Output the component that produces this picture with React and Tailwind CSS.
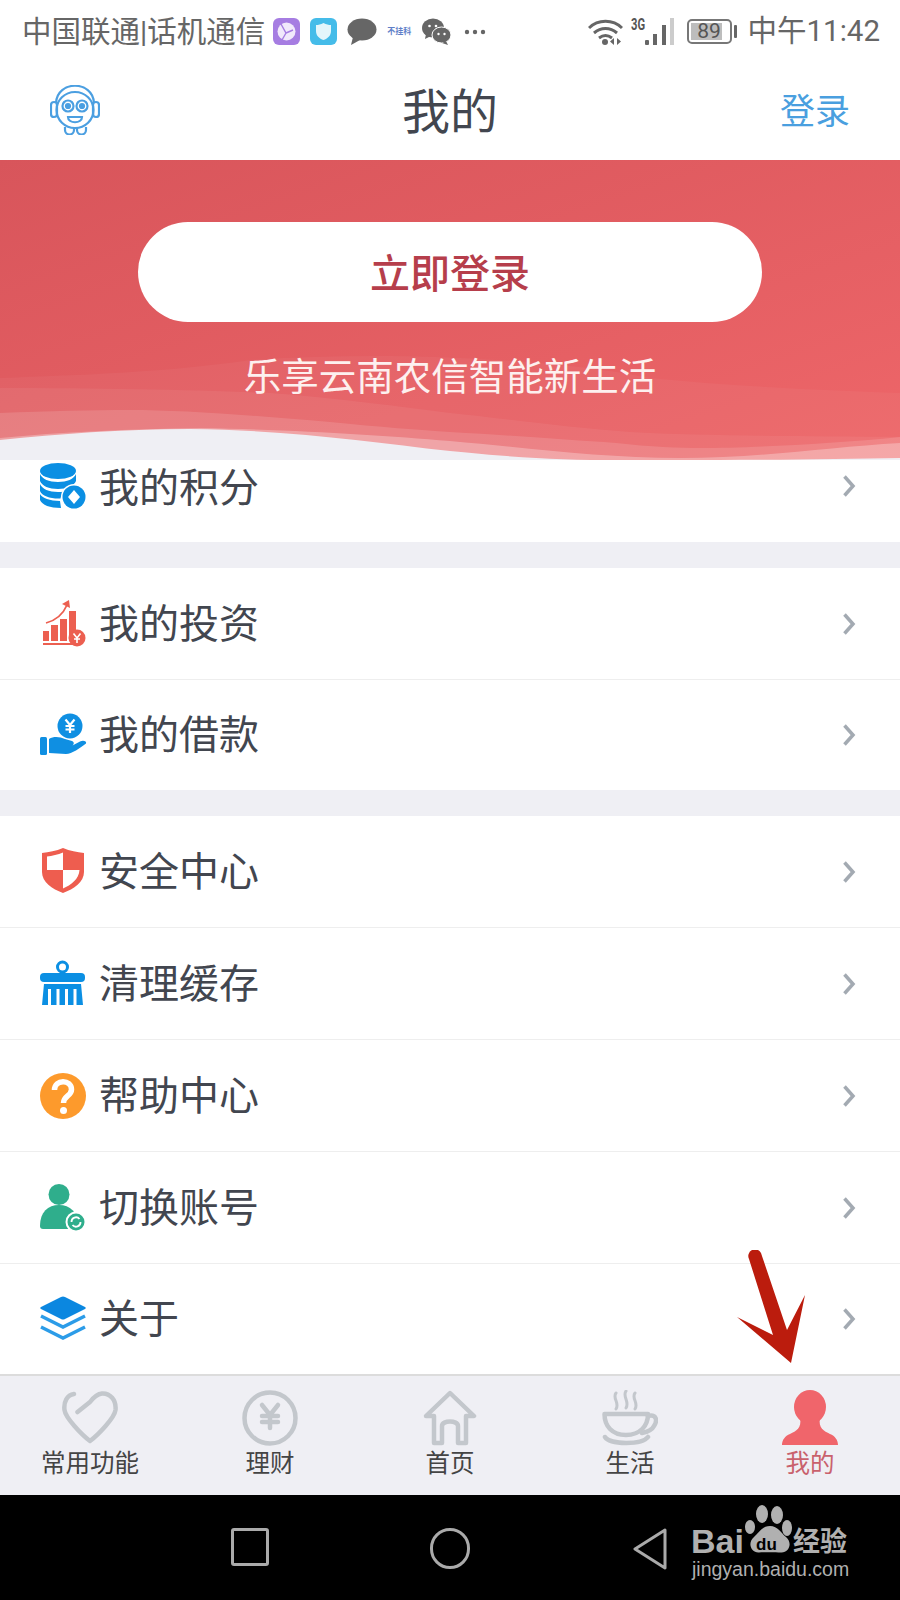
import React from 'react';

const GAP = 'h-[26px] bg-[#efeff4]';

// status bar bits
const StatusBar = () => (
  <div className="h-[60px] bg-white flex items-center justify-between pl-[22px] pr-[20px] pt-[3px] text-[#666666] text-[29.500px] leading-none">
    <div className="flex items-center">
      <span className="pt-[2px]">中国联通|话机通信</span>
      <svg className="ml-[8px]" width="27" height="27" viewBox="0 0 27 27">
        <rect width="27" height="27" rx="6" fill="#a67de2" />
        <circle cx="13.500" cy="13.500" r="9" fill="#f1e9fb" />
        <path d="M8 6l5 9 7-3M13 15l-4 7" stroke="#a67de2" strokeWidth="1.400" fill="none" />
      </svg>
      <svg className="ml-[10px]" width="27" height="27" viewBox="0 0 27 27">
        <rect width="27" height="27" rx="6" fill="#45bce9" />
        <path d="M13.500 5c3 1.500 5 2 7.500 2v6c0 5-3.500 7.500-7.500 9-4-1.500-7.500-4-7.500-9V7c2.500 0 4.500-.5 7.500-2z" fill="#e4f6fb" />
      </svg>
      <svg className="ml-[10px]" width="30" height="27" viewBox="0 0 30 27">
        <ellipse cx="15" cy="11.500" rx="14.500" ry="11" fill="#666666" />
        <path d="M6 19l-2 8 9-5z" fill="#666666" />
      </svg>
      <span className="ml-[10px] w-[24px] text-[8px] font-bold text-[#5f7fc8] whitespace-nowrap">不挂科</span>
      <svg className="ml-[11px]" width="29" height="27" viewBox="0 0 29 27">
        <ellipse cx="11" cy="10" rx="11" ry="9.500" fill="#666666" />
        <path d="M4 16l-1 5 6-3z" fill="#666666" />
        <ellipse cx="19.500" cy="17" rx="9.500" ry="8" fill="#666666" stroke="#ffffff" strokeWidth="1" />
        <path d="M24 23l2 4-6-2z" fill="#666666" />
        <circle cx="7.500" cy="8" r="1.300" fill="#fff" />
        <circle cx="14" cy="8" r="1.300" fill="#fff" />
        <circle cx="16.500" cy="16" r="1.200" fill="#fff" />
        <circle cx="22.500" cy="16" r="1.200" fill="#fff" />
      </svg>
      <svg className="ml-[13px]" width="22" height="6" viewBox="0 0 22 6">
        <circle cx="3" cy="3" r="2.200" fill="#666666" />
        <circle cx="11" cy="3" r="2.200" fill="#666666" />
        <circle cx="19" cy="3" r="2.200" fill="#666666" />
      </svg>
    </div>
    <div className="flex items-center">
      <svg width="35" height="28" viewBox="0 0 35 28">
        <path d="M1 10C10 1 25 1 34 10M6 15c7-6 16-6 23 0M11 20c4-3 9-3 13 0" stroke="#666666" strokeWidth="3" fill="none" />
        <circle cx="17" cy="24" r="3" fill="#666666" />
        <path d="M26 20v7l-4-3.500zM29 20v7l4-3.500z" fill="#666666" />
      </svg>
      <div className="relative ml-[8px] w-[44px] h-[28px]">
        <span className="absolute left-0 -top-[1px] text-[16px] font-bold text-[#555555]" style={{ transform: 'scaleX(.7)', transformOrigin: 'left top' }}>3G</span>
        <svg className="absolute left-0 top-0" width="44" height="28" viewBox="0 0 44 28">
          <rect x="14" y="22" width="4" height="5" rx="1" fill="#666666" />
          <rect x="22" y="16" width="4" height="11" fill="#666666" />
          <rect x="31" y="7" width="4" height="20" fill="#666666" />
          <rect x="39" y="0" width="4" height="27" fill="#cccccc" />
        </svg>
      </div>
      <div className="ml-[12px] w-[45px] h-[25px] border-2 border-[#777777] rounded-[5px] p-[2px] relative">
        <div className="h-full w-[86%] bg-[#bdbdbd]" />
        <span className="absolute inset-0 flex items-center justify-center text-[21px] text-[#555555]" style={{ fontFamily: 'Roboto' }}>89</span>
      </div>
      <div className="ml-[2px] w-[3px] h-[13px] bg-[#666666] rounded-[1px]" />
      <span className="ml-[11px] pt-[1px]">中午11:42</span>
    </div>
  </div>
);

const Header = () => (
  <div className="h-[100px] bg-white relative flex items-center justify-center">
    <svg className="absolute left-[50px] top-[25px]" width="50" height="50" viewBox="0 0 50 50" fill="none" stroke="#4b9fe1" strokeWidth="2.200">
      <path d="M6 18C7 -5 43 -5 44 18" />
      <rect x="1" y="17" width="6" height="15" rx="3" />
      <rect x="43" y="17" width="6" height="15" rx="3" />
      <ellipse cx="25" cy="25" rx="18.500" ry="18" />
      <circle cx="18" cy="21" r="5.500" />
      <circle cx="32" cy="21" r="5.500" />
      <circle cx="18" cy="21" r="2" fill="#4b9fe1" />
      <circle cx="32" cy="21" r="2" fill="#4b9fe1" />
      <path d="M18 32h14c0 7-14 7-14 0z" />
      <path d="M15 42v3a4.500 4.500 0 0 0 9 0v-2M27 43v2a4.500 4.500 0 0 0 9 0v-3" />
    </svg>
    <span className="pt-[6px] text-[48px] text-[#42464f] leading-none">我的</span>
    <span className="absolute left-[780px] pt-[4px] text-[35px] text-[#4a9fdf] leading-none">登录</span>
  </div>
);

const Banner = () => (
  <div className="h-[300px] relative overflow-hidden bg-linear-to-br from-[#d8555b] to-[#ee6669]">
    <svg className="absolute left-0 top-0" width="900" height="300" viewBox="0 0 900 300">
      <path d="M0 218C80 215 170 212 250 200C400 190 560 200 650 218C730 226 820 230 900 233V300H0Z" fill="#ffffff" fillOpacity="0.04" />
      <path d="M0 228C100 228 200 230 270 233C340 238 400 247 450 253C500 258 570 268 630 272C700 276 800 276 900 277V300H0Z" fill="#ffffff" fillOpacity="0.06" />
      <path d="M0 253C50 251 90 250 130 250C180 250 250 255 330 262C380 267 420 270 450 272C520 276 570 280 616 283C650 287 680 288 700 288C750 288 830 284 900 277V300H0Z" fill="#ffffff" fillOpacity="0.13" />
      <path d="M0 278C60 272 130 269 200 268C300 270 380 275 450 281C530 288 600 298 680 298C760 298 830 287 900 283V300H0Z" fill="#ffffff" fillOpacity="0.28" />
      <path d="M0 280C60 274 120 269 190 269C290 270 370 282 450 291C520 298 560 300 620 300L720 300C780 300 850 299 900 298V300H0Z" fill="#efeff4" />
    </svg>
    <div className="relative flex flex-col items-center">
      <div className="mt-[62px] w-[624px] h-[100px] rounded-full bg-white flex items-center justify-center pt-[5px] text-[40px] text-[#b63e4b] leading-none font-medium">立即登录</div>
      <div className="mt-[37px] text-[37.500px] text-[#fdf0ef] leading-none">乐享云南农信智能新生活</div>
    </div>
  </div>
);

const Chevron = () => (
  <svg className="ml-auto mr-[44px]" width="14" height="24" viewBox="0 0 14 24" fill="none">
    <path d="M2.500 2.500L11 12L2.500 21.500" stroke="#a3aab2" strokeWidth="3.500" />
  </svg>
);

const PointsIcon = () => (
  <svg width="48" height="48" viewBox="0 0 48 48">
    <g fill="#0b8fe3">
      <ellipse cx="18" cy="9" rx="18" ry="8" />
      <path d="M0 12c2 5 9 8 18 8s16-3 18-8v7c-2 5-9 8-18 8S2 24 0 19z" />
      <path d="M0 22c2 5 9 8 18 8 2 0 4 0 6-.5-2 2-3 4-3.500 7C11 37 2 34 0 29z" />
      <path d="M0 32c2 4 10 7 20 7l1 7C10 46 2 43 0 38z" />
    </g>
    <circle cx="34" cy="35" r="13" fill="#ffffff" />
    <circle cx="34" cy="35" r="11.500" fill="#0b8fe3" />
    <path d="M34 28l6 7-6 7-6-7z" fill="#ffffff" />
  </svg>
);

const InvestIcon = () => (
  <svg width="48" height="48" viewBox="0 0 48 48">
    <g fill="#ec5f50">
      <rect x="3" y="31" width="6" height="10" />
      <rect x="11" y="25" width="7" height="16" />
      <rect x="20" y="19" width="7" height="22" />
      <rect x="29" y="11" width="7" height="24" />
      <rect x="3" y="43" width="30" height="2" />
      <polygon points="29,0 22,4 30,8" />
      <circle cx="37" cy="38" r="8.500" />
    </g>
    <path d="M6 23Q21 19 27 5" fill="none" stroke="#ec5f50" strokeWidth="1.800" />
    <path d="M33.500 33.500L37 38l3.500-4.500M37 38v5M34 39h6" fill="none" stroke="#ffffff" strokeWidth="1.600" />
  </svg>
);

const LoanIcon = () => (
  <svg width="48" height="48" viewBox="0 0 48 48">
    <circle cx="30" cy="15" r="12.500" fill="#0f8fe2" />
    <path d="M25.500 8.500L30 14l4.500-5.500M30 14v8M25.500 15h9M25.500 18.500h9" fill="none" stroke="#ffffff" strokeWidth="2.200" />
    <rect x="0" y="26" width="7" height="18" rx="1.500" fill="#0f8fe2" />
    <path d="M9 28C14 25 20 26 25 28L32 30C34.500 31 34 33.500 32.500 34.500L40 30.500C43 29 47 30 46 32.500C40 37 32 43 26 43L9 42Z" fill="#0f8fe2" />
  </svg>
);

const ShieldIcon = () => (
  <svg width="48" height="48" viewBox="0 0 48 48">
    <path d="M23 0C30 3 37 4 44 5V24C44 34 34 41 23 45C12 41 2 34 2 24V5C9 4 16 3 23 0Z" fill="#ee5d4f" />
    <path d="M7 8.500C12 8 18 6.500 23 4.500V22H7ZM23 22H39.500C39 31 31 37 23 40.500Z" fill="#ffffff" />
  </svg>
);

const BrushIcon = () => (
  <svg width="48" height="48" viewBox="0 0 48 48">
    <circle cx="22.500" cy="7" r="5" fill="none" stroke="#0b8fe3" strokeWidth="3" />
    <rect x="0" y="13" width="45" height="9" rx="4" fill="#0b8fe3" />
    <path d="M4 24H41L43 45H2Z" fill="#0b8fe3" />
    <path d="M8 29h3v16H8zM16.500 29h3v16h-3zM25 29h3v16h-3zM33.500 29h3v16h-3z" fill="#ffffff" />
  </svg>
);

const HelpIcon = () => (
  <svg width="48" height="48" viewBox="0 0 48 48">
    <circle cx="23" cy="24" r="23" fill="#fd9a2c" />
    <path d="M14.500 18C14.500 7 31.500 7 31.500 17.500C31.500 24 23.500 24 23.500 31" fill="none" stroke="#ffffff" strokeWidth="5.500" />
    <circle cx="23.500" cy="38.500" r="3.500" fill="#ffffff" />
  </svg>
);

const SwitchIcon = () => (
  <svg width="48" height="48" viewBox="0 0 48 48">
    <circle cx="19" cy="10.500" r="10.500" fill="#2fae8c" />
    <path d="M0 42C0 28 8 21 19 21C30 21 38 28 38 42Q38 45 35 45H3Q0 45 0 42Z" fill="#2fae8c" />
    <circle cx="36" cy="38" r="9.500" fill="#2fae8c" stroke="#ffffff" strokeWidth="2" />
    <path d="M31.500 38a4.500 4.500 0 0 1 8-3M40.500 38a4.500 4.500 0 0 1-8 3" fill="none" stroke="#ffffff" strokeWidth="1.800" />
  </svg>
);

const LayersIcon = () => (
  <svg width="48" height="48" viewBox="0 0 48 48">
    <path d="M21 2Q23 1 25 2L45 12Q46.500 13 45 14L25 24Q23 25 21 24L1 14Q-.5 13 1 12Z" fill="#0b87e0" />
    <path d="M1 21L23 32L45 21M1 32L23 43L45 32" fill="none" stroke="#2c9ce8" strokeWidth="3.400" />
  </svg>
);

const Row = ({ icon, label, last, className = 'h-[112px]', labelClass = 'pt-[2px]' }) => (
  <div className={`flex items-center bg-white pl-[40px] ${className} ${last ? '' : 'border-b-[1.500px] border-[#eeeeee]'}`}>
    {icon}
    <span className={`ml-[11px] text-[40px] text-[#42464f] leading-none ${labelClass}`}>{label}</span>
    <Chevron />
  </div>
);

const tabs = [
  {
    label: '常用功能',
    icon: <path d="M12 4C5 5 1.500 12 2.500 20C3.500 28 20 45 28 51C36 45 52.500 28 53.500 20C54.500 10 48 3 40 3.500C35 4 31 8 28 12L15.500 22" />,
  },
  {
    label: '理财',
    icon: (
      <>
        <circle cx="28" cy="28" r="25.500" />
        <path d="M20 15L28 25L36 15M28 25V38M20 26H36M20 32H36" />
      </>
    ),
  },
  {
    label: '首页',
    icon: <path d="M20 53H12V26H4L28 3L52 26H44V53H36V36C36 30 20 30 20 36Z" />,
  },
  {
    label: '生活',
    icon: (
      <>
        <path d="M2.500 24H46C46 36 38 45 24 45C10 45 2.500 36 2.500 24Z" />
        <path d="M46 26C54 24 56 30 52 36C50 40 45 42 40 43" />
        <path d="M3 47C8 55 40 55 46 47" />
        <path d="M14 3C10 8 18 13 14 19M24 1C20 6 28 12 24 18M33 3C29 8 37 13 33 19" strokeWidth="3" />
      </>
    ),
  },
  {
    label: '我的',
    active: true,
    icon: (
      <g fill="#f0656b" stroke="none">
        <ellipse cx="28" cy="17" rx="16" ry="17" />
        <path d="M18 28C20 38 14 41 8 44C3 46 0 50 0 55H56C56 50 53 46 48 44C42 41 36 38 38 28Z" />
      </g>
    ),
  },
];

const TabBar = () => (
  <div className="h-[121px] bg-[#efeff4] border-t-2 border-[#dcdcdc] flex">
    {tabs.map((tab) => (
      <div key={tab.label} className="w-[180px] flex flex-col items-center pt-[14px]">
        <svg width="56" height="56" viewBox="0 0 56 56" fill="none" stroke="#c3c7cc" strokeWidth="4.500" strokeLinecap="round" strokeLinejoin="round">
          {tab.icon}
        </svg>
        <span className={`mt-[6px] text-[24.500px] leading-none ${tab.active ? 'text-[#c9616c]' : 'text-[#444444]'}`}>{tab.label}</span>
      </div>
    ))}
  </div>
);

const NavBar = () => (
  <div className="h-[105px] bg-black relative flex items-start pl-[231px] pt-[33px]">
    <div className="w-[38px] h-[38px] border-[3px] border-[#aaaaaa] rounded-[3px]" />
    <div className="ml-[161px] w-[40px] h-[41px] border-[3px] border-[#aaaaaa] rounded-full" />
    <svg className="ml-[162px]" width="36" height="42" viewBox="0 0 36 42" fill="none">
      <path d="M33 2L3 21L33 40Z" stroke="#aaaaaa" strokeWidth="3" strokeLinejoin="round" />
    </svg>
    {/* baidu watermark */}
    <div className="absolute left-[690px] top-[9px] w-[165px] h-[90px] text-[#b0b0b0]">
      <span className="absolute left-[1px] top-[20px] text-[34px] leading-none font-bold" style={{ fontFamily: 'Liberation Sans' }}>Bai</span>
      <svg className="absolute left-[55px] top-0" width="50" height="52" viewBox="0 0 50 52">
        <g fill="#b0b0b0">
          <ellipse cx="5" cy="23" rx="5" ry="7" />
          <ellipse cx="17" cy="10" rx="6" ry="9" />
          <ellipse cx="32" cy="11" rx="6" ry="9" />
          <ellipse cx="42" cy="24" rx="5" ry="8" />
          <path d="M25 22C33 22 36 29 41 33C48 39 44 49 36 48.500C30 48 20 48 14 48.500C6 49 2 39 9 33C14 29 17 22 25 22Z" />
        </g>
      </svg>
      <span className="absolute left-[66px] top-[32px] text-[17px] leading-none font-bold text-black" style={{ fontFamily: 'Liberation Sans' }}>du</span>
      <span className="absolute left-[103px] top-[25px] text-[27px] leading-none font-bold">经验</span>
      <span className="absolute left-[2px] top-[56px] text-[19.500px] leading-none whitespace-nowrap" style={{ fontFamily: 'Liberation Sans' }}>jingyan.baidu.com</span>
    </div>
  </div>
);

const App = () => {
  return (
    <div className="relative w-[900px] h-[1600px] overflow-hidden bg-[#efeff4]" style={{ fontFamily: 'Roboto, "Noto Sans CJK SC", sans-serif' }}>
      <StatusBar />
      <Header />
      <Banner />

      {/* list, first row is scrolled under the banner */}
      <Row icon={<PointsIcon />} label="我的积分" last className="h-[82px] pb-[30px]" labelClass="pt-[6px]" />
      <div className={GAP} />
      <Row icon={<InvestIcon />} label="我的投资" />
      <Row icon={<LoanIcon />} label="我的借款" last className="h-[110px]" />
      <div className={GAP} />
      <Row icon={<ShieldIcon />} label="安全中心" />
      <Row icon={<BrushIcon />} label="清理缓存" />
      <Row icon={<HelpIcon />} label="帮助中心" />
      <Row icon={<SwitchIcon />} label="切换账号" />
      <Row icon={<LayersIcon />} label="关于" last className="h-[110px]" />

      <TabBar />
      <NavBar />

      {/* red arrow drawn on top of the screenshot */}
      <svg className="absolute left-[730px] top-[1250px]" width="80" height="118" viewBox="0 0 80 118">
        <path d="M19 9L43 85L7 67L61 113L75 45L57 80L31 3A6.500 6.500 0 0 0 19 9Z" fill="#bb1c0d" />
      </svg>
    </div>
  );
};

export default App;
